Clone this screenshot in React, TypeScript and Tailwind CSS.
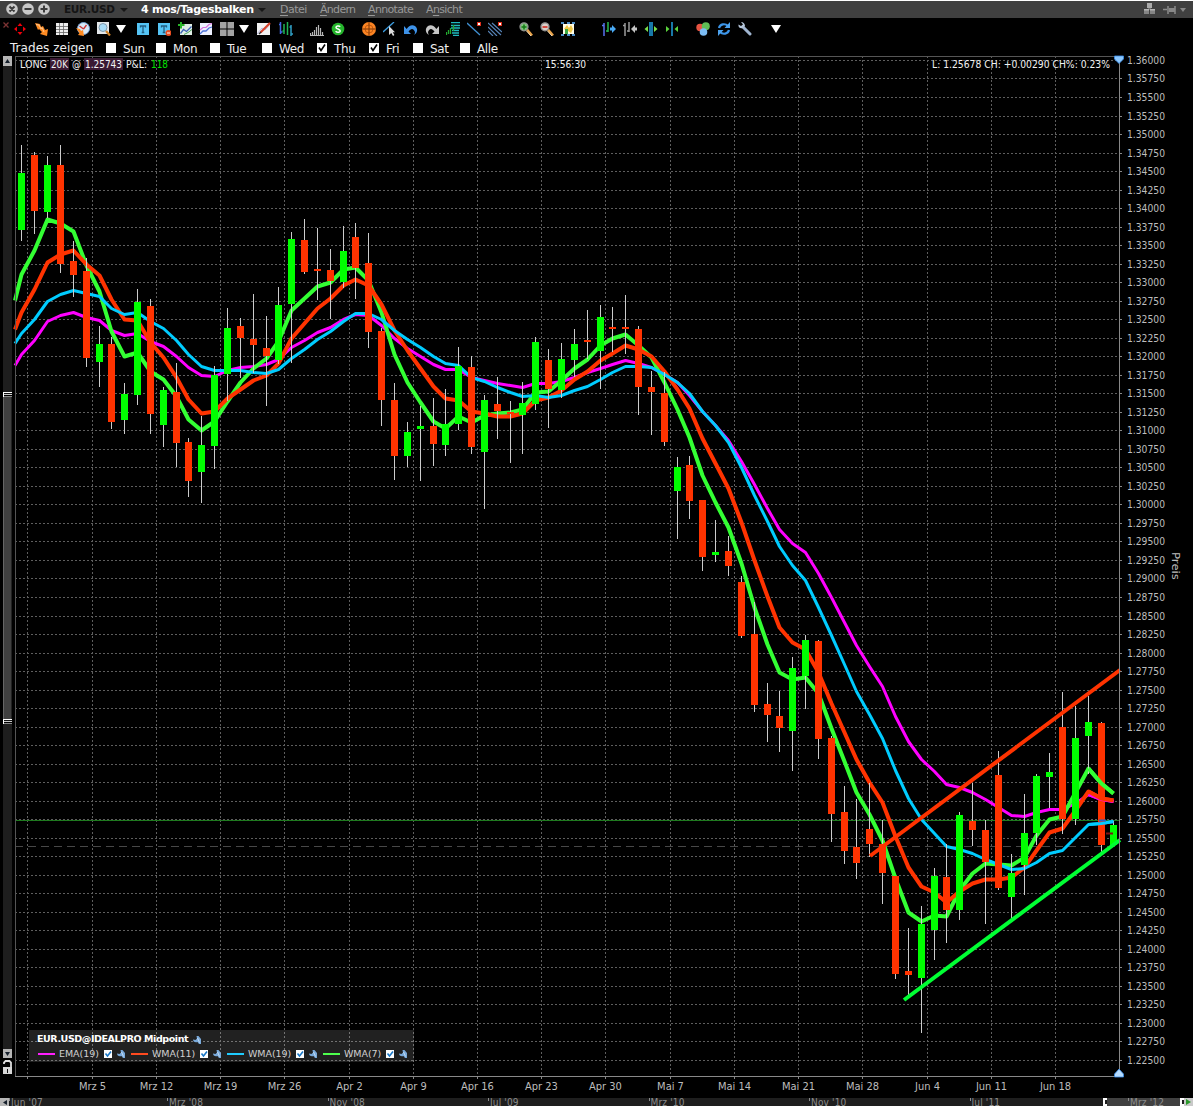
import type { ReactNode } from 'react';

type Candle = [x: number, high: number, top: number, bottom: number, low: number, up: 0 | 1];

const CANDLES: Candle[] = [
  [21, 145, 173, 230, 241, 1], [34, 152, 155, 211, 234, 0], [47, 156, 165, 212, 218, 1], [60, 145, 165, 264, 273, 0],
  [73, 241, 261, 275, 297, 0], [86, 258, 271, 358, 367, 0], [99, 326, 344, 362, 387, 1], [111, 337, 344, 422, 429, 0],
  [124, 383, 394, 420, 434, 1], [137, 289, 302, 395, 405, 1], [150, 299, 306, 414, 434, 0], [163, 387, 390, 425, 447, 1],
  [176, 363, 392, 443, 467, 0], [188, 438, 442, 481, 497, 0], [201, 416, 445, 472, 503, 1], [214, 366, 375, 446, 469, 1],
  [227, 308, 328, 374, 401, 1], [240, 318, 326, 338, 378, 0], [253, 294, 339, 345, 373, 0], [266, 316, 348, 356, 406, 0],
  [278, 287, 305, 360, 364, 1], [291, 232, 239, 304, 363, 1], [304, 219, 240, 272, 274, 0], [317, 228, 269, 271, 300, 0],
  [330, 249, 270, 281, 319, 0], [343, 226, 251, 282, 288, 1], [355, 223, 237, 268, 299, 0], [368, 233, 263, 332, 348, 0],
  [381, 328, 331, 400, 426, 0], [394, 383, 400, 456, 480, 0], [407, 422, 432, 456, 467, 1], [420, 406, 426, 429, 481, 1],
  [433, 398, 426, 444, 466, 0], [445, 389, 424, 445, 456, 1], [458, 347, 366, 424, 430, 1], [471, 356, 367, 447, 454, 0],
  [484, 395, 400, 452, 509, 1], [497, 377, 404, 411, 439, 0], [510, 401, 412, 414, 463, 0], [522, 382, 403, 415, 454, 1],
  [535, 337, 342, 404, 410, 1], [548, 349, 360, 389, 428, 0], [561, 343, 359, 390, 398, 1], [574, 329, 344, 360, 377, 1],
  [587, 310, 340, 342, 359, 0], [600, 305, 317, 351, 389, 1], [612, 307, 327, 329, 352, 0], [625, 295, 327, 329, 354, 0],
  [638, 326, 329, 387, 415, 0], [651, 371, 387, 392, 435, 0], [664, 372, 393, 442, 446, 0], [677, 457, 467, 491, 539, 1],
  [689, 456, 465, 501, 519, 0], [702, 500, 500, 557, 571, 0], [715, 520, 552, 555, 562, 1], [728, 536, 551, 566, 576, 0],
  [741, 576, 582, 636, 638, 0], [754, 602, 634, 705, 712, 0], [767, 683, 704, 715, 742, 0], [779, 691, 716, 728, 752, 0],
  [792, 657, 668, 731, 771, 1], [805, 635, 640, 676, 709, 1], [818, 640, 641, 739, 759, 0], [831, 736, 738, 814, 842, 0],
  [844, 786, 812, 851, 864, 0], [856, 799, 847, 863, 879, 0], [869, 783, 829, 844, 857, 0], [882, 820, 844, 873, 904, 0],
  [895, 876, 876, 974, 979, 0], [908, 928, 971, 975, 996, 0], [921, 906, 924, 978, 1033, 1], [934, 868, 876, 930, 960, 1],
  [946, 844, 877, 910, 943, 0], [959, 812, 815, 910, 920, 1], [972, 783, 821, 830, 846, 0], [985, 820, 830, 862, 924, 0],
  [998, 751, 775, 888, 890, 0], [1011, 854, 873, 897, 920, 1], [1024, 794, 833, 865, 895, 1], [1036, 774, 776, 833, 845, 1],
  [1049, 753, 772, 777, 808, 1], [1062, 692, 727, 819, 834, 0], [1075, 706, 738, 819, 825, 1], [1088, 696, 722, 736, 774, 1],
  [1101, 722, 723, 845, 852, 0], [1113, 821, 825, 845, 845, 1],
];

// averages start at the left chart edge, then one value per candle
const EMA19 = [
  365, 354, 340, 321, 315, 312, 317, 320, 330, 335, 333, 341, 346, 356, 367, 375, 376, 370, 367, 366, 364, 359, 347, 340, 332,
  327, 319, 314, 315, 325, 338, 348, 356, 364, 369, 369, 377, 380, 383, 385, 387, 383, 383, 381, 377, 372, 368, 364, 360, 363,
  367, 374, 382, 395, 411, 425, 440, 461, 484, 508, 529, 543, 552, 573, 597, 622, 645, 666, 686, 716, 741, 759, 771, 784, 787,
  792, 799, 807, 815, 816, 812, 809, 809, 803, 794, 799, 801,
];
const WMA19 = [
  343, 333, 319, 301, 294, 290, 293, 296, 308, 314, 312, 321, 328, 340, 354, 366, 370, 370, 370, 372, 373, 369, 358, 349, 339,
  331, 321, 313, 313, 319, 330, 339, 347, 356, 363, 365, 377, 381, 387, 392, 396, 395, 397, 395, 390, 386, 379, 372, 366, 366,
  367, 374, 382, 393, 411, 425, 442, 467, 495, 521, 546, 565, 580, 607, 635, 664, 691, 714, 738, 770, 798, 819, 833, 846, 849,
  853, 859, 864, 869, 868, 862, 853, 850, 837, 824, 823, 821,
];
const WMA11 = [
  329, 312, 289, 262, 254, 250, 264, 275, 299, 319, 320, 342, 357, 377, 399, 413, 411, 398, 389, 380, 375, 363, 338, 323, 308,
  298, 285, 279, 285, 304, 330, 350, 368, 386, 398, 400, 411, 413, 416, 416, 413, 400, 397, 390, 379, 371, 360, 353, 345, 349,
  356, 371, 389, 408, 438, 463, 488, 522, 560, 596, 627, 642, 649, 672, 703, 732, 759, 782, 802, 836, 867, 886, 892, 902, 891,
  883, 879, 879, 877, 867, 850, 832, 828, 810, 791, 798, 800,
];
const WMA7 = [
  300, 274, 250, 219, 223, 231, 265, 291, 331, 356, 352, 371, 379, 396, 419, 430, 421, 401, 382, 368, 358, 341, 310, 298, 286,
  282, 269, 267, 280, 312, 354, 382, 402, 421, 428, 416, 422, 415, 413, 412, 409, 392, 391, 380, 368, 359, 345, 338, 334, 345,
  357, 382, 409, 437, 475, 502, 527, 563, 607, 644, 672, 679, 677, 693, 728, 761, 792, 814, 840, 878, 912, 921, 915, 916, 890,
  873, 863, 864, 865, 857, 835, 819, 816, 792, 768, 783, 793,
];

const AVERAGES = [
  { name: 'EMA(19)', color: '#ff00ff', width: 3, ys: EMA19 },
  { name: 'WMA(7)', color: '#33ff33', width: 4, ys: WMA7 },
  { name: 'WMA(11)', color: '#ff3300', width: 4, ys: WMA11 },
  { name: 'WMA(19)', color: '#00ccff', width: 3, ys: WMA19 },
];

const WEEKS: [number, string][] = [
  [27, ''], [92, 'Mrz 5'], [156, 'Mrz 12'], [220, 'Mrz 19'], [284, 'Mrz 26'], [349, 'Apr 2'], [413, 'Apr 9'],
  [477, 'Apr 16'], [541, 'Apr 23'], [605, 'Apr 30'], [670, 'Mai 7'], [734, 'Mai 14'], [798, 'Mai 21'],
  [862, 'Mai 28'], [927, 'Jun 4'], [991, 'Jun 11'], [1055, 'Jun 18'],
];

const PRICES = Array.from({ length: 55 }, (_, k) => ({
  y: Math.round(59.96 + k * 18.5185),
  label: (1.36 - k * 0.0025).toFixed(5),
}));

function points(ys: number[], from = 0) {
  return ys
    .map((y, i) => [i === 0 ? 15 : CANDLES[i - 1][0] + 0.5, y + 0.5])
    .slice(from)
    .map((p) => p.join(','))
    .join(' ');
}

export default function App() {
  return (
    <div className="flex h-[1106px] w-[1193px] flex-col overflow-hidden bg-black font-['DejaVu_Sans_Condensed','DejaVu_Sans',sans-serif] text-white">
      <TitleBar />
      <Toolbar />
      <DayFilter />
      <div className="relative flex h-[1042px] shrink-0">
        <PriceScroll />
        <Chart />
        <Legend />
      </div>
      <TimeScroll />
    </div>
  );
}

function Menu({ label, className }: { label: string; className: string }) {
  const at = label === 'Ansicht' ? 1 : 0;
  return (
    <span className={`shrink-0 whitespace-nowrap pt-[2px] text-[11px] text-[#999] ${className}`}>
      {label.slice(0, at)}
      <span className="underline underline-offset-2">{label[at]}</span>
      {label.slice(at + 1)}
    </span>
  );
}

function TitleBar() {
  return (
    <div className="flex h-[18px] shrink-0 items-center border-t border-white bg-[#404040] pl-[6px] font-['DejaVu_Sans',sans-serif]">
      <svg width="44" height="12" viewBox="0 0 44 12" className="mb-px shrink-0">
        {[6, 22, 38].map((x) => (
          <circle key={x} cx={x} cy="6" r="5.8" fill="#c9c9c9" />
        ))}
        <g stroke="#3c3c3c" strokeWidth="2">
          <path d="M3.5 3.5l5 5M8.5 3.5l-5 5M18.5 6h7M34.5 6h7M38 2.5v7" />
        </g>
      </svg>
      <span className="ml-[14px] w-[56px] shrink-0 text-[10.5px] font-bold tracking-[-0.3px] text-[#141414]">EUR.USD</span>
      <Caret className="text-[#161616]" />
      <span className="ml-[13px] w-[117px] shrink-0 whitespace-nowrap pt-[2px] text-[11px] font-bold tracking-[-0.3px]">4 mos/Tagesbalken</span>
      <Caret className="text-[#161616]" />
      <Menu label="Datei" className="ml-[14px] w-[40px] tracking-[-0.5px]" />
      <Menu label="Ändern" className="w-[48px] tracking-[-0.7px]" />
      <Menu label="Annotate" className="w-[58px] tracking-[-0.65px]" />
      <Menu label="Ansicht" className="tracking-[-0.65px]" />
      <svg width="46" height="14" viewBox="0 0 46 14" className="ml-auto mr-[4px] shrink-0">
        <path d="M4 0h5v5H4z" fill="#aaa" />
        <path d="M5 5h3v2H5z" fill="#6c6c6c" />
        <path d="M1 6h5v5H1zM7 6h5v5H7z" fill="#858585" />
        <path d="M1 6h5v1.500H1zM7 6h5v1.500H7z" fill="#b5b5b5" />
        <path d="M20 6.500h4M25 3v8M32 3v8" stroke="#8c8c8c" strokeWidth="1.500" />
        <path d="M26 5h6v4h-6zM37 5h6l-3 4z" fill="#888" />
      </svg>
    </div>
  );
}

function Caret({ className }: { className: string }) {
  return (
    <svg width="8" height="4" viewBox="0 0 8 4" className={`shrink-0 ${className}`}>
      <path d="M0 0h8L4 4z" fill="currentColor" />
    </svg>
  );
}

function Icon({ children }: { children: ReactNode }) {
  return (
    <svg width="14" height="14" viewBox="0 0 14 14" fill="none" className="shrink-0">
      {children}
    </svg>
  );
}

function Drop() {
  return (
    <svg width="10" height="8" viewBox="0 0 10 8" className="shrink-0">
      <path d="M0 0h10L5 8z" fill="#fff" />
    </svg>
  );
}

function NoteIcon({ minus = false }: { minus?: boolean }) {
  return (
    <Icon>
      <path d="M1 1h12v12H1z" fill="#55c4f5" />
      <path d="M4.5 5.5V4h5v1.500M7 4v6M5.700 10.500h2.600" stroke="#235d80" strokeWidth="1.300" />
      {minus ? (
        <>
          <circle cx="11.500" cy="11" r="3" fill="#e84c20" />
          <path d="M10 11h3" stroke="#fff" />
        </>
      ) : null}
    </Icon>
  );
}

function ZoomIcon({ sign, fill, ink }: { sign: string; fill: string; ink: string }) {
  return (
    <Icon>
      <path d="M8 7.500l5 6" stroke="#e9a34a" strokeWidth="2.500" />
      <path d="M7.500 9l4.500 5" stroke="#f3dcb4" />
      <circle cx="5" cy="4.800" r="4" fill={fill} stroke="#8f8f8f" strokeWidth="1.300" />
      <path d={sign} stroke={ink} strokeWidth="1.500" />
    </Icon>
  );
}

function Toolbar() {
  return (
    <div className="flex h-[22px] shrink-0 items-center">
      <svg width="6" height="6" viewBox="0 0 6 6" className="mb-[8px] ml-[3px] shrink-0">
        <path d="M0.500 0.500l5 5M5.500 0.500l-5 5" stroke="#7d3434" strokeWidth="1.300" />
      </svg>
      <div className="ml-[4px] flex items-center gap-[7px]">
        <Icon>
          <path d="M7 1l2.500 3h-5zM7 13l2.500-3h-5zM1 7l3-2.500v5zM13 7l-3-2.500v5z" fill="#f0000a" />
        </Icon>
        <Icon>
          <path d="M1 1l5 1 1 3 2-1 2 4 3-1-1 7-7-2 2-2-3-3-1 1z" fill="#ff8b22" />
          <path d="M2 2.500l3 0.500 2 4 1-1.500 2 4.500" stroke="#ffc890" />
        </Icon>
        <Icon>
          <path d="M1 1h12v12H1z" fill="#eee" />
          <path d="M1 4.500h12M1 7.500h12M1 10.500h12M4.500 1v12M8.500 1v12" stroke="#666" strokeWidth="0.800" />
        </Icon>
        <Icon>
          <circle cx="7.500" cy="6.500" r="6" fill="#d9e9f8" stroke="#719ed0" />
          <path d="M7.500 7l3-4M7.500 7l-4-3" stroke="#c33" strokeWidth="1.300" />
          <path d="M0 6l4 1 1 2 2-1 1 6-6-1 1.500-2z" fill="#ff8b22" />
        </Icon>
        <Icon>
          <path d="M0 0h12v12H0z" fill="#e3e7ea" />
          <path d="M9 9l4 4.500" stroke="#cf8126" strokeWidth="2.200" />
          <circle cx="6" cy="5.500" r="4" fill="#a8dcf7" stroke="#7f98ac" />
        </Icon>
      </div>
      <div className="ml-[5px]">
        <Drop />
      </div>
      <div className="ml-[10px] flex items-center gap-[7px]">
        <NoteIcon />
        <NoteIcon minus />
        <Icon>
          <path d="M2 2h12v11H2z" fill="#dfeee6" />
          <path d="M2.500 11.500l3-4 3 2 5-5" stroke="#3b62b5" strokeWidth="1.300" />
          <path d="M6 12.500l4-2 4-3" stroke="#49a45a" />
          <path d="M3 0v6.500M0 3h6.500" stroke="#29b629" strokeWidth="2" />
        </Icon>
        <Icon>
          <path d="M1 1h12v12H1z" fill="#edf1ff" />
          <path d="M1 8l3-2.500 3 0 3-3 3-1" stroke="#d873dc" strokeWidth="1.200" />
          <path d="M1 12l3-3 3 0 3-3 3-1" stroke="#4c73d9" strokeWidth="1.300" />
        </Icon>
        <Icon>
          <path d="M0 0h6.500v6.500H0zM7.500 0H14v6.500H7.500zM0 7.500h6.500V14H0zM7.500 7.500H14V14H7.500z" fill="#a3a3a3" />
        </Icon>
      </div>
      <div className="ml-[5px] flex items-center gap-[8px]">
        <Drop />
        <Icon>
          <path d="M0 1h13v12H0z" fill="#f3f3f3" />
          <path d="M0 12l5-6 3 2 5-6" stroke="#b8b8e0" />
          <path d="M3.500 10.500L13 1" stroke="#d8412a" strokeWidth="2.200" />
          <path d="M2 12l2-2" stroke="#333" strokeWidth="1.500" />
        </Icon>
        <Icon>
          <path d="M1.500 0v12M0 2.500h1.500M1.500 10h2" stroke="#4169e1" strokeWidth="1.500" />
          <path d="M5 2v10M3.500 9H5M8.500 0v13" stroke="#1fb554" strokeWidth="1.500" />
          <path d="M12 3v11M10.500 5H12M12 12h2" stroke="#2f9ec4" strokeWidth="1.500" />
        </Icon>
      </div>
      <div className="ml-[17px] flex items-center gap-[7px]">
        <Icon>
          <path d="M0.500 13v-2M2.500 13v-3M4.500 13V8M6.500 13V5M8.500 13V3M10.500 13V6M12.500 13v-3M0 13.500h14" stroke="#b8b8b8" strokeWidth="1.200" />
        </Icon>
        <Icon>
          <circle cx="7" cy="7" r="6.300" fill="#25b52c" />
          <path d="M9.200 4.700C8 3.500 5 3.700 5 5.400S9.200 7 9.200 8.900 6 10.600 4.600 9.200" stroke="#fff" strokeWidth="1.500" />
        </Icon>
      </div>
      <div className="ml-[17px] flex items-center gap-[7px]">
        <Icon>
          <circle cx="7" cy="7" r="7" fill="#fb8423" />
          <circle cx="7" cy="7" r="4" stroke="#c55d10" />
          <path d="M7 0v14M0 7h14" stroke="#7b3606" />
        </Icon>
        <Icon>
          <path d="M0 10L11 0" stroke="#3d9de0" strokeWidth="1.300" />
          <path d="M6 4v9l2.300-2 1.700 3 1.400-1-1.600-2.700H12z" fill="#ddd" />
        </Icon>
        <Icon>
          <path d="M0 4v8h7L4.500 9.500C7 6 9.500 6 11 10c0 2-1 3-1 3 4-2 4-7 1-9C8 2 4.500 4 2.700 7z" fill="#3e92e8" />
        </Icon>
        <Icon>
          <path d="M14 4v8H7l2.500-2.500C7 6 4.500 6 3 10c0 2 1 3 1 3-4-2-4-7-1-9 3-2 6.500 0 8.300 3z" fill="#c5c5c5" />
        </Icon>
        <Icon>
          <path d="M5 0.500h9M5 3.500h9M5 6h9M6 8.500h7M6 11h7M7 13.500h6" stroke="#1fbac0" strokeWidth="1.300" />
          <path d="M0.500 13v-3M2.500 12V8M4.500 12V6M7.500 9V3" stroke="#22a82f" strokeWidth="1.300" />
        </Icon>
        <Icon>
          <path d="M0 1l13 12" stroke="#3f8fd0" strokeWidth="1.300" />
          <path d="M10 0h4v4h-4z" fill="#e02f1c" />
          <path d="M11 1h2v2h-2z" fill="#fff" />
        </Icon>
        <Icon>
          <path d="M0 1l13 12M0 5l9 9M4 1l10 9M0 9l5 5" stroke="#5784b8" strokeWidth="1.200" />
          <path d="M10 0h4v4h-4z" fill="#e02f1c" />
          <path d="M11 1h2v2h-2z" fill="#fff" />
        </Icon>
      </div>
      <div className="ml-[17px] flex items-center gap-[7px]">
        <ZoomIcon sign="M2.500 5h5M5 2.500v5" fill="#7dc578" ink="#107512" />
        <ZoomIcon sign="M2.500 5h5" fill="#d8cfc9" ink="#d31c10" />
        <Icon>
          <path d="M2 2h11v10H2z" fill="#fffbe6" />
          <path d="M3 7l3-4 2 3 2-3 2 4-2 4-3-2z" fill="#edc544" />
          <path d="M0 0h3v2H0zM6 0h3v2H6zM11 0h3v2h-3zM0 12h3v2H0zM6 12h3v2H6zM11 12h3v2h-3z" fill="#4b8cc5" />
          <path d="M4 7h3v5H4z" fill="#3ba743" />
        </Icon>
      </div>
      <div className="ml-[27px] flex items-center gap-[7px]">
        <Icon>
          <path d="M2 1v13M0 3.500h2" stroke="#5872f0" strokeWidth="1.500" />
          <path d="M6 0v10M4 9h2" stroke="#28b84c" strokeWidth="1.500" />
          <path d="M8 5.500h2V3l4 4-4 4V8.500H8z" fill="#49a8f2" />
        </Icon>
        <Icon>
          <path d="M2 1v13M0 3.500h2M6 0v10M4 9h2" stroke="#9a9a9a" strokeWidth="1.500" />
          <path d="M14 5.500h-2V3L8 7l4 4V8.500h2z" fill="#c4c4c4" />
        </Icon>
        <Icon>
          <path d="M5 0h4v14H5z" fill="#1878a8" />
          <path d="M4 4v6L0.500 7zM10 4v6l3.500-3z" fill="#7ade4a" />
        </Icon>
        <Icon>
          <path d="M6 0h2v14H6z" fill="#1878a8" />
          <path d="M1 4v6l3.500-3zM13 4v6L9.500 7z" fill="#5ad23c" />
        </Icon>
      </div>
      <div className="ml-[17px] flex items-center gap-[7px]">
        <Icon>
          <circle cx="4" cy="5.500" r="3.700" fill="#e65341" />
          <circle cx="9.800" cy="4.200" r="4" fill="#61bd55" />
          <circle cx="7.500" cy="10" r="3.800" fill="#7cbcf4" />
        </Icon>
        <Icon>
          <path d="M2 6c1-4 6-5 9-2M12 8c-1 4-6 5-9 2" stroke="#3b94e8" strokeWidth="2.200" />
          <path d="M13 0v6H7.500zM1 14V8h5.500z" fill="#4ca2ee" />
        </Icon>
        <Icon>
          <path d="M5 5l7 7" stroke="#9fb4cf" strokeWidth="3" strokeLinecap="round" />
          <path d="M3 0l2 2.500L3 4 0.500 2.500C0 5 2 7 5 6l2-2c0-2-1.500-4-4-4z" fill="#b4c4d8" />
        </Icon>
      </div>
      <div className="ml-[19px]">
        <Drop />
      </div>
    </div>
  );
}

const DAYS = [
  { day: 'Sun', on: false, w: 'w-[50px]' },
  { day: 'Mon', on: false, w: 'w-[54px]' },
  { day: 'Tue', on: false, w: 'w-[52px]' },
  { day: 'Wed', on: false, w: 'w-[55px]' },
  { day: 'Thu', on: true, w: 'w-[52px]' },
  { day: 'Fri', on: true, w: 'w-[44px]' },
  { day: 'Sat', on: false, w: 'w-[47px]' },
  { day: 'Alle', on: false, w: 'w-[50px]' },
];

function DayFilter() {
  return (
    <div className="flex h-4 shrink-0 items-center whitespace-nowrap pl-[10px] font-['DejaVu_Sans',sans-serif] text-[12px] leading-4 text-[#eee]">
      <span className="w-[96px] shrink-0 tracking-[0.05px]">Trades zeigen</span>
      {DAYS.map(({ day, on, w }) => (
        <label key={day} className={`flex shrink-0 items-center gap-[7px] ${w}`}>
          <svg width="10" height="10" viewBox="0 0 10 10" className="shrink-0">
            <path d="M0 0h10v10H0z" fill="#fff" />
            {on ? <path d="M2 4.500l2 3L8 1.500" fill="none" stroke="#000" strokeWidth="1.600" /> : null}
          </svg>
          <span className="pt-[2px] tracking-[-0.4px]">{day}</span>
        </label>
      ))}
    </div>
  );
}

function PriceScroll() {
  return (
    <div className="flex w-[15px] shrink-0 flex-col items-start pl-[3px]">
      <div className="flex h-[10px] w-[9px] items-center justify-center bg-[#b5b5b5]">
        <svg width="5" height="4"><path d="M0 4h5L2.500 0z" fill="#16202c" /></svg>
      </div>
      <div className="h-[326px] w-[9px] bg-[#1e1e1e]" />
      <Grip />
      <div className="h-[322px] w-[9px] border-l border-r border-l-[#666] border-r-[#222] bg-[#404040]" />
      <Grip />
      <div className="h-[325px] w-[9px] bg-[#1e1e1e]" />
      <div className="flex h-[9px] w-[9px] items-center justify-center bg-[#b5b5b5]">
        <svg width="5" height="4"><path d="M0 0h5L2.500 4z" fill="#16202c" /></svg>
      </div>
      <svg width="9" height="15" viewBox="0 0 9 15" className="mt-[2px]">
        <path d="M1 4V2.500L2.500 1h4L8 2.500V8" fill="none" stroke="#ddd" strokeWidth="1.800" />
        <path d="M0 7h9v7H0z" fill="#d7d7d7" />
        <path d="M4 9h1v4H4z" fill="#111" />
      </svg>
    </div>
  );
}

function Grip() {
  return (
    <svg width="9" height="5" viewBox="0 0 9 5" shapeRendering="crispEdges">
      <path d="M0 0h9v1H0zM0 1h1v4H0z" fill="#fff" />
      <path d="M1 1h8v1H1z" fill="#111" />
      <path d="M1 2h8v1H1z" fill="#ccc" />
      <path d="M1 4h8v1H1z" fill="#888" />
    </svg>
  );
}

function Chart() {
  return (
    <svg width="1178" height="1042" viewBox="15 56 1178 1042" fill="none" fontSize="11" className="shrink-0 overflow-visible">
      <g stroke="#5e5e5e" strokeDasharray="2 2" shapeRendering="crispEdges">
        {PRICES.map((p) => (
          <path key={p.y} d={`M15 ${p.y + 0.5}H1119`} />
        ))}
        {WEEKS.map(([x]) => (
          <path key={x} d={`M${x + 0.5} 56V1076`} />
        ))}
      </g>
      <path d="M15 820.500H1119" stroke="#1f7a1f" shapeRendering="crispEdges" />
      <path d="M15 846.500H1119" stroke="#484848" strokeDasharray="8 5" shapeRendering="crispEdges" />

      {AVERAGES.map((a) => (
        <polyline key={a.name} points={points(a.ys)} stroke={a.color} strokeWidth={a.width} strokeLinejoin="round" />
      ))}

      <g shapeRendering="crispEdges">
        {CANDLES.map(([x, high, top, bottom, low, up]) => (
          <g key={x}>
            <rect x={x} y={high} width="1" height={low - high} fill="#ccc" />
            <rect x={x - 3} y={top} width="7" height={bottom - top} fill={up ? '#00ff00' : '#ff3300'} />
          </g>
        ))}
      </g>

      {/* last stretch of the averages runs over the bars */}
      {AVERAGES.map((a) => (
        <polyline key={a.name} points={points(a.ys, 84)} stroke={a.color} strokeWidth={a.width} />
      ))}
      <path d="M1099 820.500h7" stroke="#1e66c8" strokeWidth="2" />
      <path d="M1106 833.500h7" stroke="#7d1414" strokeWidth="2" />

      <path d="M870 856L1120 670" stroke="#ff3300" strokeWidth="4" />
      <path d="M904 1000L1120 840" stroke="#00ff33" strokeWidth="4" />

      <g shapeRendering="crispEdges">
        <path d="M15 56.500H1119M15.500 56V1076" stroke="#555" />
        <path d="M15 1076.500H1120M1119.500 56V1077" stroke="#888" />
        {PRICES.map((p) => (
          <path key={p.y} d={`M1120 ${p.y + 0.5}h2`} stroke="#888" />
        ))}
        {WEEKS.map(([x]) => (
          <path key={x} d={`M${x + 0.5} 1077v2`} stroke="#888" />
        ))}
      </g>
      <path d="M1114.500 56h9v3l-4.500 4.500-4.500-4.500z" fill="#8cc8ff" stroke="#3a8eea" strokeWidth="0.800" />
      <path d="M1114.500 1077h9v-3l-4.500-5-4.500 5z" fill="#b5dcff" stroke="#3a8eea" strokeWidth="0.800" />

      <g fill="#bdbdbd">
        {PRICES.map((p) => (
          <text key={p.y} x="1127" y={p.y + 4} textLength="38" lengthAdjust="spacingAndGlyphs">
            {p.label}
          </text>
        ))}
        {WEEKS.map(([x, label]) => (
          <text key={x} x={x + 0.5} y="1090" textAnchor="middle">
            {label}
          </text>
        ))}
        <text x="0" y="0" fontSize="11" transform="translate(1172 552) rotate(90)" textLength="28" lengthAdjust="spacingAndGlyphs">
          Preis
        </text>
      </g>

      <g fill="#f2f2f2">
        <path d="M50 58h19v12H50zM84 58h39v12H84z" fill="#3a1a33" />
        <text x="20" y="68" textLength="27" lengthAdjust="spacingAndGlyphs">LONG</text>
        <text x="51" y="68" textLength="17" lengthAdjust="spacingAndGlyphs">20K</text>
        <text x="72" y="68" textLength="9" lengthAdjust="spacingAndGlyphs">@</text>
        <text x="85" y="68" textLength="37" lengthAdjust="spacingAndGlyphs">1.25743</text>
        <text x="126" y="68" textLength="21" lengthAdjust="spacingAndGlyphs">P&amp;L:</text>
        <text x="151" y="68" fill="#00e000" textLength="17" lengthAdjust="spacingAndGlyphs">118</text>
        <text x="545" y="68" textLength="41" lengthAdjust="spacingAndGlyphs">15:56:30</text>
        <text x="932" y="68" textLength="178" lengthAdjust="spacingAndGlyphs">L: 1.25678 CH: +0.00290 CH%: 0.23%</text>
      </g>
    </svg>
  );
}

function Wrench() {
  return (
    <svg width="8" height="8" viewBox="0 0 8 8" className="shrink-0">
      <path d="M3.500 0h2L8 3v5H6L4.500 6C2 7 0 5.500 0 3.500l2.500 0.500L4 2.500z" fill="#79a9da" />
      <path d="M4.500 2l2 4.500" stroke="#c5def5" />
    </svg>
  );
}

const LEGEND = [
  { name: 'EMA(19)', line: 'bg-[#ff1fff]', w: 'w-[93px]', text: 'w-[43px]' },
  { name: 'WMA(11)', line: 'bg-[#ff4a1f]', w: 'w-[96px]', text: 'w-[46px]' },
  { name: 'WMA(19)', line: 'bg-[#1fccff]', w: 'w-[96px]', text: 'w-[46px]' },
  { name: 'WMA(7)', line: 'bg-[#4dff4d]', w: 'w-[90px]', text: 'w-[40px]' },
];

function Legend() {
  return (
    <div className="absolute left-[29px] top-[974px] h-8 w-[385px] bg-white/13 pl-[8px] font-['DejaVu_Sans',sans-serif]">
      <div className="flex h-[17px] items-center pt-[2px]">
        <span className="w-[156px] whitespace-nowrap text-[9.5px] font-bold tracking-[-0.42px]">EUR.USD@IDEALPRO Midpoint</span>
        <Wrench />
      </div>
      <div className="flex h-[14px] items-center pl-px text-[9.5px] text-[#d0d0d0]">
        {LEGEND.map((l) => (
          <div key={l.name} className={`flex shrink-0 items-center ${l.w}`}>
            <span className={`mr-[4px] h-[2px] w-[17px] shrink-0 ${l.line}`} />
            <span className={`mr-[2px] shrink-0 whitespace-nowrap pt-px tracking-[-0.05px] ${l.text}`}>{l.name}</span>
            <svg width="8" height="8" viewBox="0 0 8 8" className="mr-[5px] shrink-0">
              <path d="M0 0h8v8H0z" fill="#fff" />
              <path d="M1.500 3.500l2 2.500L7 1.500" fill="none" stroke="#1a78c8" strokeWidth="1.600" />
            </svg>
            <Wrench />
          </div>
        ))}
      </div>
    </div>
  );
}

const MONTHS = ["Jun '07", "Mrz '08", "Nov '08", "Jul '09", "Mrz '10", "Nov '10", "Jul '11"];

function TimeScroll() {
  return (
    <div className="flex h-2 shrink-0 overflow-hidden bg-[#1e1e1e] text-[10px] leading-[9px] text-[#8c8c8c]">
      <div className="flex w-[9px] shrink-0 items-center justify-center bg-[#b5b5b5]">
        <svg width="4" height="5"><path d="M4 0v5L0 2.500z" fill="#16202c" /></svg>
      </div>
      <div className="flex w-[1094px] shrink-0 overflow-hidden">
        {MONTHS.map((m) => (
          <span key={m} className="flex w-[160.5px] shrink-0 whitespace-nowrap tracking-[0.15px] first:w-[158px]">
            <i className="mr-px h-[3px] w-px bg-[#8c8c8c]" />
            {m}
          </span>
        ))}
      </div>
      <div className="w-[4px] shrink-0 border-2 border-r-0 border-white" />
      <div className="flex w-[73px] shrink-0 bg-[#404040] pl-[21px]">
        <i className="mr-px h-[3px] w-px bg-[#8c8c8c]" />
        <span className="whitespace-nowrap tracking-[0.15px]">Mrz '12</span>
      </div>
      <div className="w-[4px] shrink-0 border-2 border-r-0 border-white" />
      <div className="flex w-[9px] shrink-0 items-center justify-center bg-[#c9c9c9]">
        <svg width="5" height="6"><path d="M0 0v6L5 3z" fill="#2c9a2c" /></svg>
      </div>
    </div>
  );
}
